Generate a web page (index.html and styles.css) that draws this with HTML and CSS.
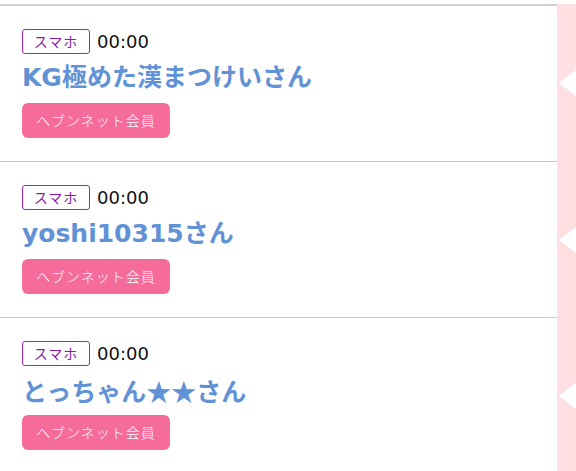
FILE: index.html
```html
<!DOCTYPE html>
<html lang="ja">
<head>
<meta charset="UTF-8">
<link rel="stylesheet" href="styles.css">
</head>
<body>

<div class="list">
  <div class="row">
    <div class="entry">
      <div class="meta"><span class="device">スマホ</span><span class="time">00:00</span></div>
      <div class="name">KG極めた漢まつけいさん</div>
      <span class="member">ヘブンネット会員</span>
    </div>
    <div class="side"></div>
  </div>

  <div class="row">
    <div class="entry">
      <div class="meta"><span class="device">スマホ</span><span class="time">00:00</span></div>
      <div class="name">yoshi10315さん</div>
      <span class="member">ヘブンネット会員</span>
    </div>
    <div class="side"></div>
  </div>

  <div class="row">
    <div class="entry">
      <div class="meta"><span class="device">スマホ</span><span class="time">00:00</span></div>
      <div class="name">とっちゃん<span class="star">★★</span>さん</div>
      <span class="member">ヘブンネット会員</span>
    </div>
    <div class="side"></div>
  </div>
</div>

</body>
</html>
```

FILE: styles.css
```css
body {
  margin: 0;
  background: #ffffff;
  font-family: "Noto Sans CJK JP", "Liberation Sans", sans-serif;
}

.list {
  padding-top: 4px;
}

.row {
  display: flex;
}

.entry {
  flex: 1;
  padding: 22px 22px 23px;
  border-bottom: 1px solid #c9c9c9;
}

.row:first-child .entry {
  border-top: 2px solid #d0d0d0;
}

.meta {
  display: flex;
  align-items: center;
  height: 26px;
  margin-bottom: 6px;
}

.device {
  box-sizing: border-box;
  width: 68px;
  height: 25px;
  border: 1.5px solid #a41fc4;
  border-radius: 3px;
  color: #8a1aa8;
  font-size: 14px;
  line-height: 22px;
  text-align: center;
  letter-spacing: 1px;
}

.time {
  margin-left: 7px;
  font-family: "DejaVu Sans", sans-serif;
  font-size: 18px;
  color: #111;
}

.name {
  height: 30px;
  line-height: 30px;
  padding-top: 3px;
  margin-bottom: 10px;
  font-family: "DejaVu Sans", "Noto Sans CJK JP", sans-serif;
  font-size: 25px;
  font-weight: bold;
  color: #6192d6;
  white-space: nowrap;
}

.star {
  font-family: "Noto Sans CJK JP", sans-serif;
}

.member {
  display: inline-block;
  width: 148px;
  height: 35px;
  line-height: 35px;
  border-radius: 6px;
  background: #f56b9a;
  color: #fff;
  font-size: 14px;
  font-weight: 300;
  letter-spacing: 1px;
  text-align: center;
}

.side {
  position: relative;
  width: 19px;
  background: #ffe0e2;
}

/* notch pointing into the list */
.side::after {
  content: "";
  position: absolute;
  right: 0;
  top: 50%;
  margin-top: -13px;
  border-top: 13px solid transparent;
  border-bottom: 13px solid transparent;
  border-right: 17px solid #ffffff;
}
```
